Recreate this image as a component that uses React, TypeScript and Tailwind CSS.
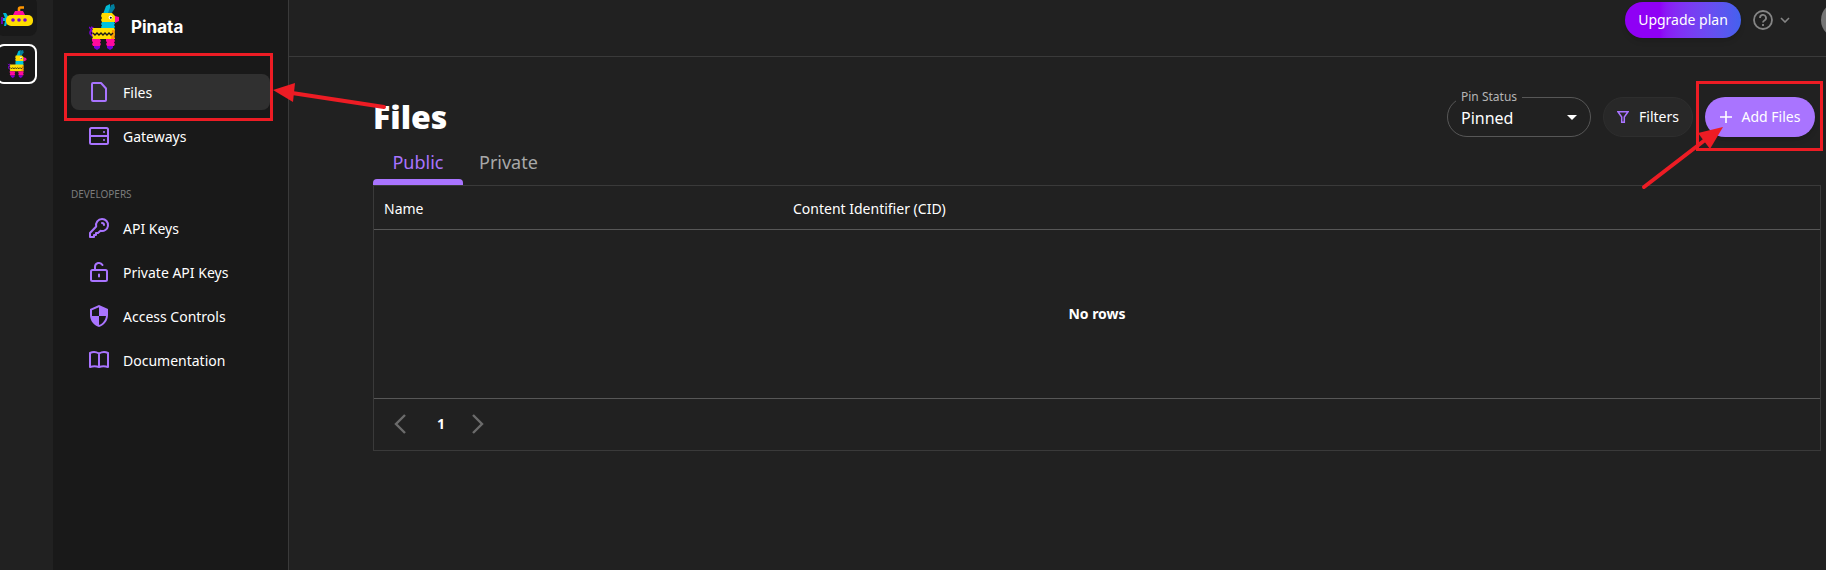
import type { ReactNode } from "react";
import { MdSecurity } from "react-icons/md";

type IconProps = { className?: string };

function Llama({ className }: IconProps) {
  return (
    <svg viewBox="0 0 30 46" className={className} aria-hidden="true">
      <path d="M5 33C1 31 0 29 2 26M5 33C3 28 5 27 0 23M5 31C6 27 5 24 2 23" stroke="#7a00d6" strokeWidth="1.6" fill="none" />
      <path d="M14 10L17 2l4-2v10z" fill="#00b8d4" />
      <path d="M19 9l3-8 3-1 1 4-4 6z" fill="#007f9e" />
      <path d="M13 9h10l3 3v6H13l-1-2 1-2-1-2z" fill="#ffdd00" />
      <path d="M26 12l4 1 .5 2-.5 2-4 2z" fill="#ff0a9d" />
      <circle cx="21.5" cy="13.5" r="1.900" fill="#fff" />
      <circle cx="21.8" cy="13.7" r="1" fill="#111" />
      <path d="M13 18h12l1 1.500-1 1.500 1 1.500-1 2.500H13l-1-2 1-1.500-1-1.500z" fill="#00c3e0" />
      <path d="M3 24h22l1 2-1 2 1 2-1 2 1 3H3l1-2-1-2 1-2-1-2 1-2z" fill="#ffdd00" />
      <path d="M23 26h2l1 2-1 2 1 2-1 1 1 2h-4z" fill="#ff9a00" />
      <path d="M4 29l2 2 2-2 2 2 2-2 2 2 2-2 2 2 2-2 2 2 2-2" stroke="#1a1a1a" strokeWidth="1.400" fill="none" />
      <path d="M3 35h8l1 2-1 1.500 1 1.500-1 2H4l-1-2 1-1.500-1-1.500z" fill="#ff0a9d" />
      <path d="M17 35h8l1 2-1 1.500 1 1.500-1 2h-7l-1-2 1-1.500-1-1.500z" fill="#ff0a9d" />
      <path d="M5 42h6v2l-3 2-3-2zM18 42h6v2l-3 2-3-2z" fill="#7a00d6" />
    </svg>
  );
}

function Submarine({ className }: IconProps) {
  return (
    <svg viewBox="0 0 32 22" className={className} aria-hidden="true">
      <path d="M18 7V4q0-1.500 1.500-1.500H23" stroke="#ff9500" strokeWidth="2.600" fill="none" />
      <path d="M12 10l2-4h8l2 4z" fill="#ff0a9d" />
      <path d="M2 8h3l3 5-3 8H3l1-5H2v-3h2z" fill="#00b8d4" />
      <rect x="5" y="10" width="27" height="11" rx="5" fill="#ffdd00" />
      <path d="M1 12v7" stroke="#7a00d6" strokeWidth="1.600" />
      <circle cx="12" cy="15" r="1.800" fill="#7a00d6" />
      <circle cx="18" cy="15" r="1.800" fill="#7a00d6" />
      <circle cx="24" cy="15" r="1.800" fill="#7a00d6" />
    </svg>
  );
}

function Outline({ children }: { children: ReactNode }) {
  return (
    <svg
      viewBox="0 0 24 24"
      className="size-6"
      fill="none"
      stroke="currentColor"
      strokeWidth="2"
      strokeLinejoin="round"
      strokeLinecap="round"
      aria-hidden="true"
    >
      {children}
    </svg>
  );
}

const mainLinks = [
  {
    label: "Files",
    active: true,
    icon: (
      <Outline>
        <path d="M6 3h8l5 5.500V20a1 1 0 0 1-1 1H6a1 1 0 0 1-1-1V4a1 1 0 0 1 1-1z" />
      </Outline>
    ),
  },
  {
    label: "Gateways",
    icon: (
      <Outline>
        <rect x="3" y="4" width="18" height="16" rx="1.500" />
        <path d="M3 12h18M17 8h.01M17 16h.01" />
      </Outline>
    ),
  },
];

const developerLinks = [
  {
    label: "API Keys",
    icon: (
      <Outline>
        <path d="M15 3a6 6 0 0 0-5.800 7.500L3 17v4h4v-2h2v-2h2l2.500-2.200A6 6 0 1 0 15 3z" />
        <path d="M15 7a2 2 0 0 1 2 2" />
      </Outline>
    ),
  },
  {
    label: "Private API Keys",
    icon: (
      <Outline>
        <rect x="4" y="10" width="16" height="11" rx="1.500" />
        <path d="M8 10V7a4 4 0 0 1 7.500-2M12 14.500v2" />
      </Outline>
    ),
  },
  { label: "Access Controls", icon: <MdSecurity className="size-6" /> },
  {
    label: "Documentation",
    icon: (
      <Outline>
        <path d="M12 5.500Q7.500 3 3 5v14q4.500-1.500 9 0 4.500-1.500 9 0V5q-4.500-2-9 .5zM12 5.500V19" />
      </Outline>
    ),
  },
];

type NavLink = { label: string; icon: ReactNode; active?: boolean };

function NavList({ links }: { links: NavLink[] }) {
  return (
    <ul className="flex flex-col gap-2">
      {links.map((link) => (
        <li key={link.label}>
          <a
            href="#"
            className={`flex h-9 items-center gap-3 rounded-lg px-4 text-sm text-white ${
              link.active ? "bg-[#303030]" : ""
            }`}
          >
            <span className="text-[#a974ff]">{link.icon}</span>
            <span className="pt-0.5">{link.label}</span>
          </a>
        </li>
      ))}
    </ul>
  );
}

function Rail() {
  return (
    <div className="w-[53px] shrink-0">
      <div className="-mt-1 -ml-1 flex flex-col gap-2">
        <a href="#" aria-label="Submarine" className="grid h-10 w-[41px] place-items-center rounded-lg bg-[#191919]">
          <Submarine className="h-[22px] w-8" />
        </a>
        <a
          href="#"
          aria-label="Pinata"
          className="grid h-10 w-[41px] place-items-center rounded-lg border-2 border-white bg-[#191919]"
        >
          <Llama className="h-7 w-5" />
        </a>
      </div>
    </div>
  );
}

function Sidebar() {
  return (
    <nav className="w-[236px] shrink-0 border-r border-[#3a3a3a] bg-[#191919] px-[18px]">
      <div className="flex h-[74px] items-start gap-3 pt-1 pl-[18px]">
        <Llama className="h-[46px] w-[30px]" />
        <span className="pt-[11px] font-['Inter',sans-serif] text-[17px] leading-6 font-bold text-white">Pinata</span>
      </div>
      <NavList links={mainLinks} />
      <h2 className="mt-6 mb-2 pt-2 text-[10px] leading-4 text-[#7c7c7c]">DEVELOPERS</h2>
      <NavList links={developerLinks} />
    </nav>
  );
}

function TopBar() {
  return (
    <header className="flex h-[57px] items-start justify-end border-b border-[#3a3a3a] pt-[2px]">
      <button className="h-9 w-[116px] rounded-full bg-linear-to-r from-[#8f00f5] from-30% to-[#4361ee] text-sm text-white shadow-md">
        Upgrade plan
      </button>
      <button aria-label="Help" className="ml-3 flex h-9 items-center gap-[7px] text-[#858585]">
        <svg viewBox="0 0 20 20" className="size-5" fill="none" stroke="currentColor" strokeWidth="1.800" aria-hidden="true">
          <circle cx="10" cy="10" r="9" />
          <path d="M7 8a3 3 0 1 1 4.500 2.500Q10 11.400 10 12.500M10 14v2" />
        </svg>
        <svg viewBox="0 0 10 6" className="h-[6px] w-[10px]" fill="none" stroke="currentColor" strokeWidth="1.600" aria-hidden="true">
          <path d="M1 1l4 4 4-4" />
        </svg>
      </button>
      <div className="ml-[31px] h-9 w-[5px] overflow-hidden">
        <button aria-label="Account" className="size-9 rounded-full bg-[#757575]" />
      </div>
    </header>
  );
}

function Controls() {
  return (
    <div className="flex gap-3 pr-[6px]">
      <div className="relative w-36">
        <label htmlFor="pin-status" className="absolute -top-2 left-[9px] bg-[#212121] px-[5px] text-xs leading-4 text-[#b5b5b5]">
          Pin Status
        </label>
        <select
          id="pin-status"
          className="h-10 w-full appearance-none rounded-full border border-[#575757] bg-transparent pt-0.5 pl-[13px] text-base text-white"
        >
          <option>Pinned</option>
        </select>
        <svg viewBox="0 0 10 5" className="pointer-events-none absolute top-[18px] right-[14px] h-[5px] w-[10px] fill-white" aria-hidden="true">
          <path d="M0 0h10L5 5z" />
        </svg>
      </div>
      <button className="flex h-10 w-[90px] items-center justify-center gap-[10px] rounded-full border border-[#2e2e2e] bg-[#282828] text-sm text-white">
        <svg viewBox="0 0 12 12" className="size-3 text-[#a974ff]" fill="none" stroke="currentColor" strokeWidth="1.500" aria-hidden="true">
          <path d="M1 .8h10L7.300 6v5.200H4.700V6z" />
        </svg>
        Filters
      </button>
      <button className="flex h-10 w-[110px] items-center justify-center gap-[10px] rounded-full bg-[#a974ff] text-sm text-white shadow-md">
        <svg viewBox="0 0 12 12" className="size-3" stroke="currentColor" strokeWidth="1.600" aria-hidden="true">
          <path d="M6 0v12M0 6h12" />
        </svg>
        Add Files
      </button>
    </div>
  );
}

function Tabs() {
  return (
    <div role="tablist" className="flex h-12 text-lg">
      <button role="tab" aria-selected="true" className="flex w-[90px] flex-col items-center justify-between pt-[11px] text-[#a974ff]">
        <span className="leading-7">Public</span>
        <span className="h-[6px] w-full rounded-t bg-[#a974ff]" />
      </button>
      <button role="tab" aria-selected="false" className="flex flex-col items-center px-4 pt-[11px] text-[#a8a8a8]">
        <span className="leading-7">Private</span>
      </button>
    </div>
  );
}

function FilesTable() {
  return (
    <div className="border border-[#3a3a3a] text-sm text-white">
      <table className="w-full table-fixed">
        <thead>
          <tr className="h-[43px] border-b border-[#575757] text-left">
            <th className="w-[409px] pt-1 pl-[10px] font-normal">Name</th>
            <th className="pt-1 pl-[10px] font-normal">Content Identifier (CID)</th>
          </tr>
        </thead>
        <tbody>
          <tr className="h-[169px] border-b border-[#575757]">
            <td colSpan={2} className="text-center font-bold">
              No rows
            </td>
          </tr>
        </tbody>
      </table>
      <div className="flex h-[51px] items-center gap-[27px] pl-5">
        <button aria-label="Previous page" className="text-[#6b6b6b]">
          <svg viewBox="0 0 12 20" className="h-5 w-3" fill="none" stroke="currentColor" strokeWidth="2.400" aria-hidden="true">
            <path d="M11 1l-9 9 9 9" />
          </svg>
        </button>
        <span className="w-3 text-right font-bold">1</span>
        <button aria-label="Next page" className="text-[#6b6b6b]">
          <svg viewBox="0 0 12 20" className="h-5 w-3" fill="none" stroke="currentColor" strokeWidth="2.400" aria-hidden="true">
            <path d="M1 1l9 9-9 9" />
          </svg>
        </button>
      </div>
    </div>
  );
}

// Red boxes and arrows drawn over the page to point at the two steps.
function Callouts() {
  return (
    <>
      <div className="pointer-events-none absolute top-[53px] left-[64px] h-[68px] w-[209px] border-3 border-[#ed1c24]" />
      <svg viewBox="0 0 120 40" className="pointer-events-none absolute top-[75px] left-[270px] h-10 w-[120px]" aria-hidden="true">
        <path d="M22 18l92 14" stroke="#ed1c24" strokeWidth="4" strokeLinecap="round" />
        <path d="M3 15l22-7-2 19z" fill="#ed1c24" />
      </svg>
      <div className="pointer-events-none absolute top-[81px] right-[3px] h-[70px] w-[127px] border-3 border-[#ed1c24]" />
      <svg viewBox="0 0 90 70" className="pointer-events-none absolute top-[122px] right-[96px] h-[70px] w-[90px]" aria-hidden="true">
        <path d="M4 65l61-47" stroke="#ed1c24" strokeWidth="4" strokeLinecap="round" />
        <path d="M83 5L70 27 58 11z" fill="#ed1c24" />
      </svg>
    </>
  );
}

export default function App() {
  return (
    <div className="relative flex min-h-screen overflow-hidden bg-[#212121] font-['Noto_Sans',sans-serif]">
      <Rail />
      <Sidebar />
      <div className="min-w-0 flex-1">
        <TopBar />
        <main className="pt-10 pr-[5px] pl-[84px]">
          <div className="flex items-center justify-between">
            <h1 className="text-[32px] leading-10 font-black text-white">Files</h1>
            <Controls />
          </div>
          <Tabs />
          <FilesTable />
        </main>
      </div>
      <Callouts />
    </div>
  );
}
